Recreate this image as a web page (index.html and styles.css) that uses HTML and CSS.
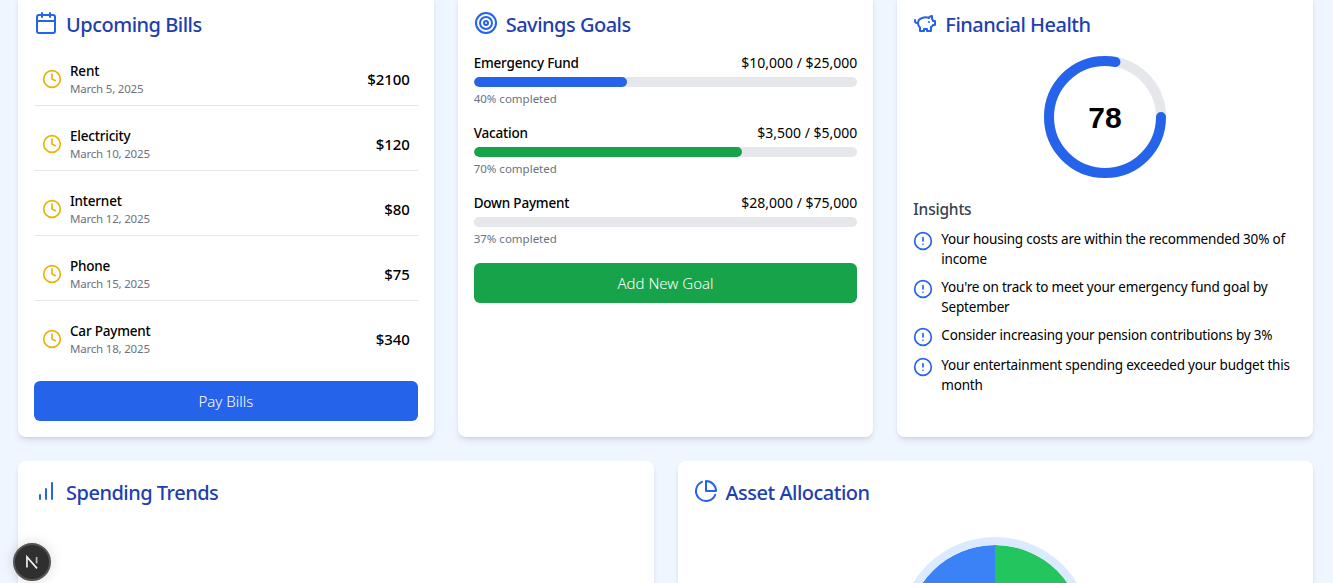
FILE: index.html
```html
<!DOCTYPE html>
<html lang="en">
<head>
    <meta charset="UTF-8">
    <title>Dashboard</title>
    <link rel="stylesheet" href="styles.css">
</head>
<body>
    <main class="dashboard">
        <section class="cardRow threeCols">
            <div class="card">
                <h2 class="cardTitle">
                    <svg class="icon titleIcon" viewBox="0 0 24 24"><rect x="3" y="4" width="18" height="18" rx="2"/><path d="M16 2v4M8 2v4M3 10h18"/></svg>
                    <span class="titleText">Upcoming Bills</span>
                </h2>
                <div class="billList">
                    <div class="bill">
                        <svg class="icon clock" viewBox="0 0 24 24"><circle cx="12" cy="12" r="10"/><path d="M12 6v6l4 2"/></svg>
                        <div class="billInfo"><p class="billName">Rent</p><p class="billDate">March 5, 2025</p></div>
                        <span class="billAmount">$2100</span>
                    </div>
                    <div class="bill">
                        <svg class="icon clock" viewBox="0 0 24 24"><circle cx="12" cy="12" r="10"/><path d="M12 6v6l4 2"/></svg>
                        <div class="billInfo"><p class="billName">Electricity</p><p class="billDate">March 10, 2025</p></div>
                        <span class="billAmount">$120</span>
                    </div>
                    <div class="bill">
                        <svg class="icon clock" viewBox="0 0 24 24"><circle cx="12" cy="12" r="10"/><path d="M12 6v6l4 2"/></svg>
                        <div class="billInfo"><p class="billName">Internet</p><p class="billDate">March 12, 2025</p></div>
                        <span class="billAmount">$80</span>
                    </div>
                    <div class="bill">
                        <svg class="icon clock" viewBox="0 0 24 24"><circle cx="12" cy="12" r="10"/><path d="M12 6v6l4 2"/></svg>
                        <div class="billInfo"><p class="billName">Phone</p><p class="billDate">March 15, 2025</p></div>
                        <span class="billAmount">$75</span>
                    </div>
                    <div class="bill">
                        <svg class="icon clock" viewBox="0 0 24 24"><circle cx="12" cy="12" r="10"/><path d="M12 6v6l4 2"/></svg>
                        <div class="billInfo"><p class="billName">Car Payment</p><p class="billDate">March 18, 2025</p></div>
                        <span class="billAmount">$340</span>
                    </div>
                </div>
                <button class="btn btnBlue">Pay Bills</button>
            </div>

            <div class="card">
                <h2 class="cardTitle">
                    <svg class="icon titleIcon" viewBox="0 0 24 24"><circle cx="12" cy="12" r="10"/><circle cx="12" cy="12" r="6"/><circle cx="12" cy="12" r="2"/></svg>
                    <span class="titleText">Savings Goals</span>
                </h2>
                <div class="goalList">
                    <div class="goal">
                        <div class="goalHead"><span class="goalName">Emergency Fund</span><span>$10,000 / $25,000</span></div>
                        <div class="track"><div class="fill fillBlue" style="width: 40%"></div></div>
                        <p class="goalNote">40% completed</p>
                    </div>
                    <div class="goal">
                        <div class="goalHead"><span class="goalName">Vacation</span><span>$3,500 / $5,000</span></div>
                        <div class="track"><div class="fill fillGreen" style="width: 70%"></div></div>
                        <p class="goalNote">70% completed</p>
                    </div>
                    <div class="goal">
                        <div class="goalHead"><span class="goalName">Down Payment</span><span>$28,000 / $75,000</span></div>
                        <div class="track"><div class="fill fillGray" style="width: 37%"></div></div>
                        <p class="goalNote">37% completed</p>
                    </div>
                </div>
                <button class="btn btnGreen">Add New Goal</button>
            </div>

            <div class="card">
                <h2 class="cardTitle">
                    <svg class="icon titleIcon" viewBox="0 0 24 24"><path d="M19 5c-1.500 0-2.800 1.400-3 2-3.500-1.500-11-.3-11 5 0 1.800 0 3 2 4.500V20h4v-2h3v2h4v-4c1-.5 1.700-1 2-2h2v-4h-2c0-1-.5-1.500-1-2V5z"/><path d="M2 9v1c0 1.100.9 2 2 2h1"/><path d="M16 11h.01"/></svg>
                    <span class="titleText">Financial Health</span>
                </h2>
                <div class="gaugeWrap">
                    <svg class="gauge" viewBox="0 0 128 128">
                        <circle class="gaugeBack" cx="64" cy="64" r="56"/>
                        <circle class="gaugeValue" cx="64" cy="64" r="56" pathLength="100" stroke-dasharray="78 100"/>
                        <text class="gaugeText" x="64" y="75" text-anchor="middle">78</text>
                    </svg>
                </div>
                <h3 class="insightsTitle">Insights</h3>
                <ul class="insights">
                    <li class="insight">
                        <svg class="icon alert" viewBox="0 0 24 24"><circle cx="12" cy="12" r="10"/><path d="M12 8v4M12 16h.01"/></svg>
                        <span>Your housing costs are within the recommended 30% of income</span>
                    </li>
                    <li class="insight">
                        <svg class="icon alert" viewBox="0 0 24 24"><circle cx="12" cy="12" r="10"/><path d="M12 8v4M12 16h.01"/></svg>
                        <span>You're on track to meet your emergency fund goal by September</span>
                    </li>
                    <li class="insight">
                        <svg class="icon alert" viewBox="0 0 24 24"><circle cx="12" cy="12" r="10"/><path d="M12 8v4M12 16h.01"/></svg>
                        <span>Consider increasing your pension contributions by 3%</span>
                    </li>
                    <li class="insight">
                        <svg class="icon alert" viewBox="0 0 24 24"><circle cx="12" cy="12" r="10"/><path d="M12 8v4M12 16h.01"/></svg>
                        <span>Your entertainment spending exceeded your budget this month</span>
                    </li>
                </ul>
            </div>
        </section>

        <section class="cardRow twoCols">
            <div class="card tallCard">
                <h2 class="cardTitle">
                    <svg class="icon titleIcon" viewBox="0 0 24 24"><path d="M12 20V10M18 20V4M6 20v-4"/></svg>
                    <span class="titleText">Spending Trends</span>
                </h2>
            </div>
            <div class="card tallCard">
                <h2 class="cardTitle">
                    <svg class="icon titleIcon" viewBox="0 0 24 24"><path d="M21.210 15.890A10 10 0 1 1 8 2.830"/><path d="M22 12A10 10 0 0 0 12 2v10z"/></svg>
                    <span class="titleText">Asset Allocation</span>
                </h2>
                <div class="pieWrap"><div class="pie"></div></div>
            </div>
        </section>
    </main>

    <div class="nextBadge">
        <svg viewBox="0 0 24 24" class="nextMark"><path d="M6.500 18V6.500L17.500 19"/><path class="nextFade" d="M17 6.500v7"/></svg>
    </div>
</body>
</html>
```

FILE: styles.css
```css
* {
    box-sizing: border-box;
}
html, body {
    height: 583px;
    margin: 0;
    overflow: hidden;
}
body {
    background: #eff6ff;
    color: #000;
    font-family: "Noto Sans", "Liberation Sans", sans-serif;
    font-size: 13.5px;
    letter-spacing: -.2px;
    line-height: 20px;
}
p, h2, h3, ul {
    margin: 0;
    padding: 0;
}

/* the page is scrolled a little, the first row starts above the window */
.dashboard {
    margin: -7px 20px 0 18px;
}
.cardRow {
    display: grid;
    gap: 24px;
    margin-bottom: 24px;
}
.threeCols { grid-template-columns: repeat(3, 1fr); }
.twoCols { grid-template-columns: repeat(2, 1fr); }

.card {
    background: #fff;
    border-radius: 8px;
    box-shadow: 0 4px 6px -1px rgba(0, 0, 0, .1), 0 2px 4px -2px rgba(0, 0, 0, .1);
    padding: 16px;
}
.tallCard { height: 400px; }

.cardTitle {
    display: flex;
    align-items: center;
    gap: 8px;
    height: 28px;
    margin-bottom: 16px;
    color: #1e40af;
    font-size: 20px;
    font-weight: 500;
    letter-spacing: -.5px;
    line-height: 28px;
}
.titleText { margin-top: 4px; }
.icon {
    flex: none;
    fill: none;
    stroke: #2563eb;
    stroke-width: 2;
    stroke-linecap: round;
    stroke-linejoin: round;
}
.titleIcon {
    width: 24px;
    height: 24px;
}

/* bills */
.billList {
    display: flex;
    flex-direction: column;
    gap: 12px;
}
.bill {
    display: flex;
    align-items: center;
    gap: 8px;
    padding: 8px;
    border-bottom: 1px solid #e5e7eb;
}
.bill:last-child { border-bottom: 0; }
.clock {
    width: 20px;
    height: 20px;
    stroke: #eab308;
}
.billInfo { flex: 1; }
.billName { font-weight: 500; }
.billDate {
    color: #6b7280;
    font-size: 11.5px;
    line-height: 16px;
}
.billAmount {
    font-size: 15px;
    font-weight: 500;
    letter-spacing: -.1px;
}

.btn {
    display: block;
    width: 100%;
    height: 40px;
    margin-top: 16px;
    border: 0;
    border-radius: 6px;
    color: #fff;
    font: inherit;
    font-size: 15px;
    font-weight: 300;
    letter-spacing: 0;
}
.btnBlue { background: #2563eb; }
.btnGreen { background: #16a34a; }

/* goals */
.goalList {
    display: flex;
    flex-direction: column;
    gap: 16px;
}
.goalHead {
    display: flex;
    justify-content: space-between;
    margin-bottom: 4px;
    font-size: 14px;
    letter-spacing: 0;
}
.goalName {
    font-size: 13.5px;
    font-weight: 500;
    letter-spacing: -.2px;
}
.track {
    height: 10px;
    border-radius: 999px;
    background: #e5e7eb;
    overflow: hidden;
}
.fill {
    height: 100%;
    border-radius: 999px;
}
.fillBlue { background: #2563eb; }
.fillGreen { background: #16a34a; }
.fillGray { background: #e5e7eb; }
.goalNote {
    margin-top: 4px;
    color: #6b7280;
    font-size: 11.5px;
    letter-spacing: 0;
    line-height: 16px;
}

/* health */
.gaugeWrap {
    display: flex;
    justify-content: center;
    height: 128px;
    margin-bottom: 16px;
}
.gauge {
    width: 128px;
    height: 128px;
}
.gaugeBack, .gaugeValue {
    fill: none;
    stroke-width: 10;
}
.gaugeBack { stroke: #e5e7eb; }
.gaugeValue {
    stroke: #2563eb;
    stroke-linecap: round;
}
.gaugeText {
    font-family: "Liberation Sans", sans-serif;
    font-size: 30px;
    font-weight: 700;
    letter-spacing: 0;
}
.insightsTitle {
    margin-bottom: 8px;
    color: #374151;
    font-size: 15.5px;
    font-weight: 500;
    line-height: 24px;
}
.insights {
    display: flex;
    flex-direction: column;
    gap: 8px;
    list-style: none;
}
.insight {
    display: flex;
    align-items: flex-start;
    gap: 8px;
}
.alert {
    width: 20px;
    height: 20px;
    margin-top: 2px;
}

/* allocation */
.pieWrap {
    display: flex;
    justify-content: center;
    margin-top: 32px;
}
.pie {
    width: 192px;
    height: 192px;
    border: 8px solid #dbeafe;
    border-radius: 50%;
    background: conic-gradient(#22c55e 0 35%, #eab308 35% 65%, #3b82f6 65% 100%);
    background-origin: border-box;
    background-clip: padding-box;
}

.nextBadge {
    position: fixed;
    left: 13px;
    top: 543px;
    display: flex;
    align-items: center;
    justify-content: center;
    width: 38px;
    height: 38px;
    border: 2px solid #555;
    border-radius: 50%;
    background: #2f2f2f;
    box-shadow: 0 0 14px rgba(0, 0, 0, .15);
}
.nextMark {
    width: 22px;
    height: 22px;
    fill: none;
    stroke: #f2f2f2;
    stroke-width: 1.800;
}
.nextFade { stroke: #bbb; }
```
